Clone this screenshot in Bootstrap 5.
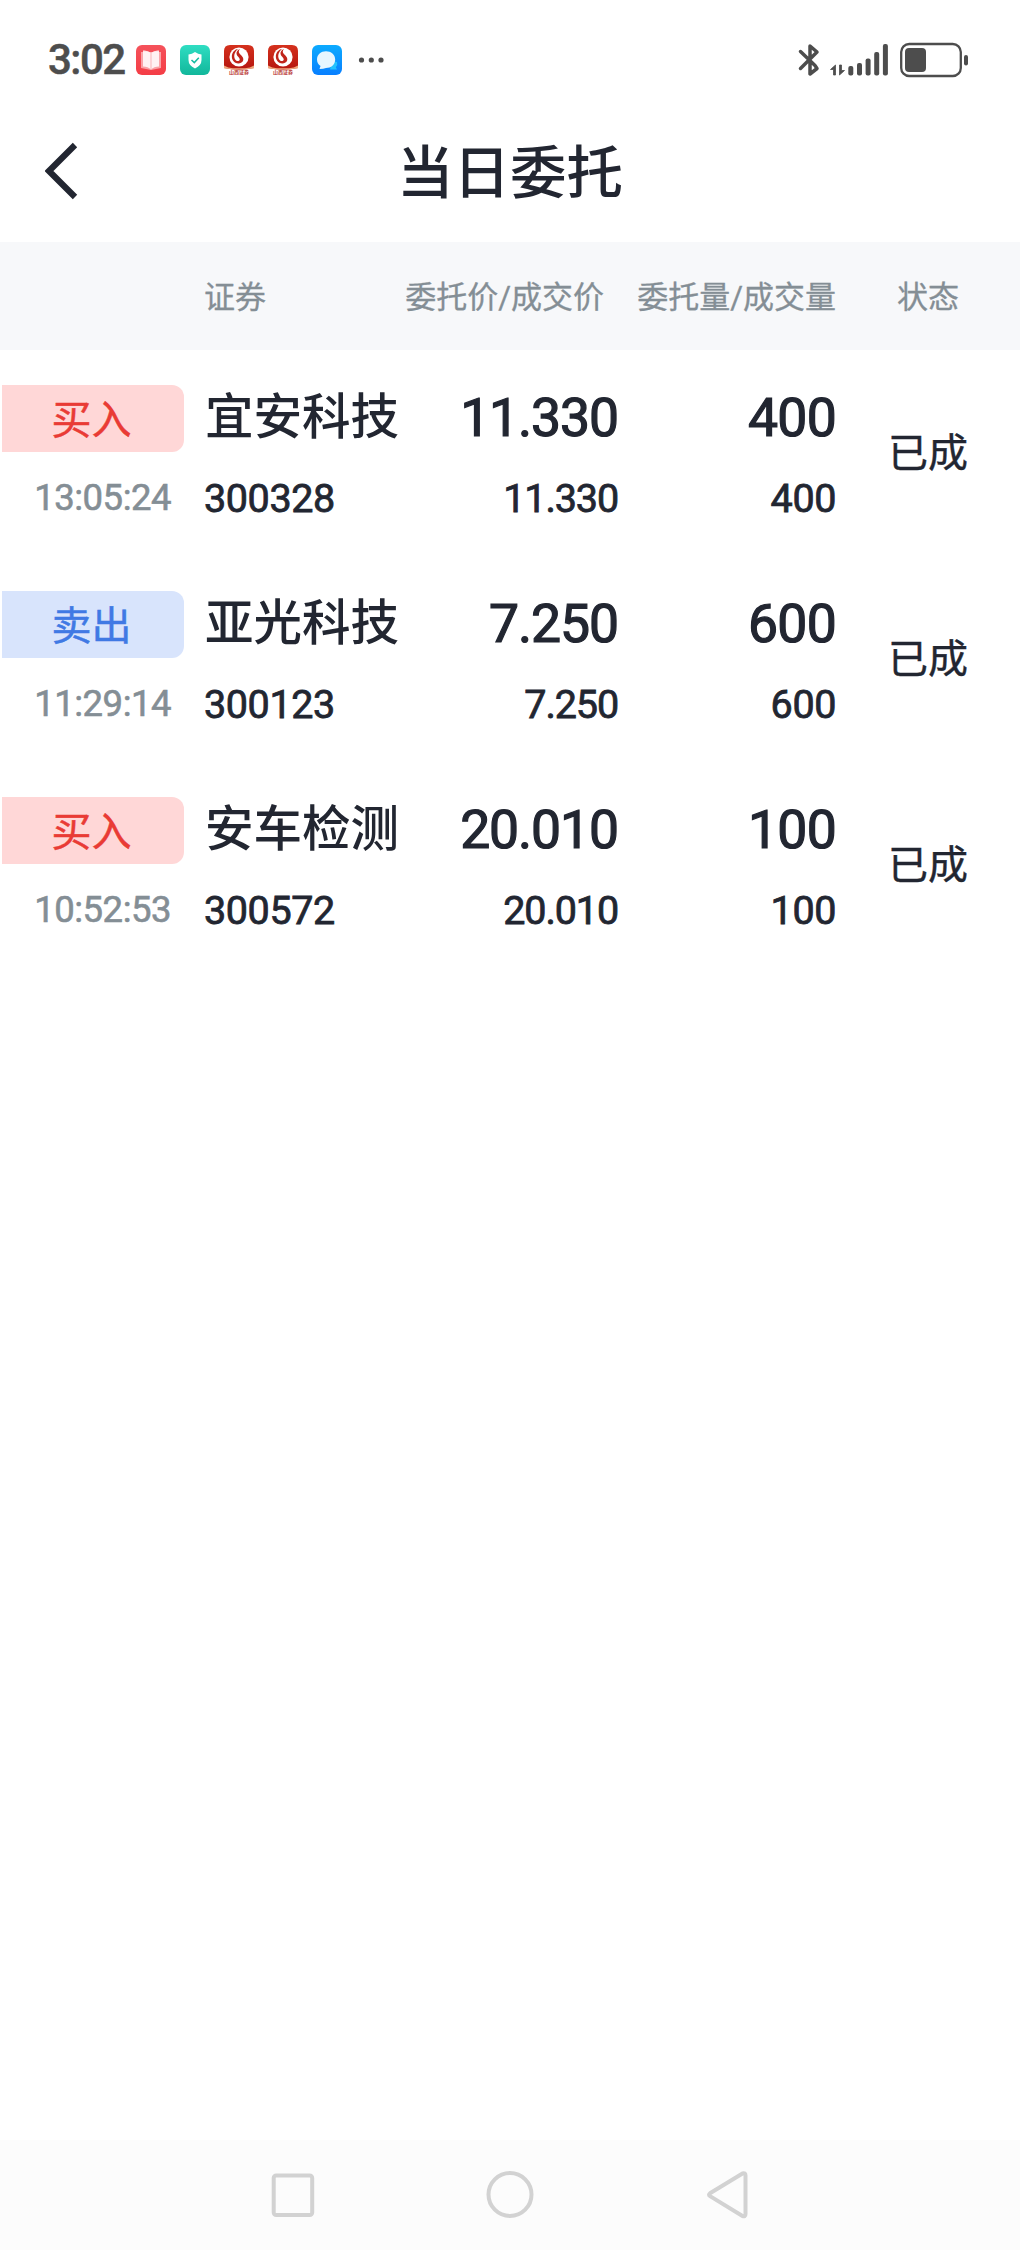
<!DOCTYPE html>
<html lang="zh-CN">
<head>
<meta charset="utf-8">
<meta name="viewport" content="width=device-width, initial-scale=1">
<title>当日委托</title>
<link href="https://cdn.jsdelivr.net/npm/bootstrap@5.3.0/dist/css/bootstrap.min.css" rel="stylesheet">
<style>
  body { font-family: Roboto, "Noto Sans CJK SC", sans-serif; color: #222631; background: #fff; font-weight: 500; }
  svg { display: block; flex: none; }
  .screen { width: 1020px; height: 2250px; overflow: hidden; }
  .status-bar { height: 120px; padding: 0 52px 0 48px; color: #4d4d4d; }
  .clock { font-size: 42px; font-weight: 500; -webkit-text-stroke: .5px; letter-spacing: -1.5px; line-height: 60px; width: 88px; }
  .apps { gap: 14px; }
  .title-bar { height: 122px; padding-left: 45px; padding-right: 45px; }
  .title-bar h1 { font-size: 56.5px; font-weight: 500; line-height: 80px; margin: 0; padding-bottom: 14px; }
  .back { width: 34px; margin-bottom: 20px; }
  .head-row { height: 108px; padding-top: 3px; background: #f7f8fa; color: #848e95; font-size: 31px; font-weight: 400; -webkit-text-stroke: .3px; line-height: 46px; }
  .c-side { width: 204px; }
  .c-name { width: 200px; }
  .c-price { width: 214px; }
  .c-qty { width: 218px; }
  .c-state { width: 184px; }
  .head-row .c-price { padding-right: 14px; }
  .order { height: 206px; }
  .order > div { padding-top: 35px; }
  .side-tag { width: 182px; height: 67px; margin-left: 1.5px; padding-right: 2px; border-radius: 0 12px 12px 0; font-size: 40px; font-weight: 400; -webkit-text-stroke: .5px; line-height: 71px; }
  .buy { background: #ffd7d7; color: #e93b35; }
  .sell { background: #d8e4fc; color: #4079e4; }
  .time { color: #848e95; font-size: 36.5px; font-weight: 400; -webkit-text-stroke: .6px; letter-spacing: -.5px; line-height: 50px; margin-top: 21px; padding-right: 33px; }
  .big { font-size: 53.5px; font-weight: 400; -webkit-text-stroke: 1.2px; letter-spacing: -.7px; line-height: 65px; height: 67px; }
  .stock { font-size: 48.5px; line-height: 66px; height: 67px; padding-left: 1px; font-weight: 500; }
  .sub { font-size: 39.5px; font-weight: 400; -webkit-text-stroke: .8px; letter-spacing: -.4px; line-height: 51px; margin-top: 21px; }
  .c-price .big, .c-price .sub { letter-spacing: -1.1px; }
  .order > .c-state { padding-top: 76px; font-size: 40px; font-weight: 400; -webkit-text-stroke: .4px; line-height: 56px; }
  .nav-keys { height: 110px; background: #fcfcfc; padding: 0 270px; }
</style>
<script src="https://cdn.jsdelivr.net/npm/bootstrap@5.3.0/dist/js/bootstrap.bundle.min.js"></script>
</head>
<body>
<svg width="0" height="0" class="position-absolute" aria-hidden="true">
  <defs>
    <linearGradient id="redGrad" x1="0" y1="0" x2="0" y2="1"><stop offset="0" stop-color="#d5311d"/><stop offset="1" stop-color="#b51610"/></linearGradient>
    <linearGradient id="tealGrad" x1="0" y1="0" x2="0" y2="1"><stop offset="0" stop-color="#2fddc2"/><stop offset="1" stop-color="#12b79b"/></linearGradient>
    <linearGradient id="roseGrad" x1="0" y1="0" x2="0" y2="1"><stop offset="0" stop-color="#f5525b"/><stop offset="1" stop-color="#f43d46"/></linearGradient>
    <linearGradient id="blueGrad" x1="0" y1="0" x2="0" y2="1"><stop offset="0" stop-color="#0cabff"/><stop offset="1" stop-color="#087fff"/></linearGradient>
    <symbol id="broker" viewBox="0 0 30 30">
      <path d="M0 23V6Q0 0 6 0H24Q30 0 30 6V23Q15 26.500 0 23Z" fill="url(#redGrad)"/>
      <path d="M0 20.500Q4 23 9 23.300H21Q26 23 30 20.500V23.200Q15 26 0 23.200Z" fill="#f0a77c"/>
      <circle cx="15" cy="12" r="9.600" fill="#fff"/>
      <path d="M14 4C8 5 6.500 11.500 9 15.500C11 19 17 19.500 19 16C20.500 12.500 17 10.500 15.500 8.500C14.500 7 14.500 5.500 16 4C11.500 6 12 9.500 14 11.500C16 13.500 16.500 15 14.500 16C11.500 16.500 9.500 13 10.500 9Q11.200 6 14 4Z" fill="#c0251b"/>
      <text x="15" y="29.300" font-size="5" font-weight="700" text-anchor="middle" fill="#b93a34">山西证券</text>
    </symbol>
  </defs>
</svg>

<main class="screen d-flex flex-column">
  <header class="status-bar d-flex align-items-center justify-content-between">
    <div class="d-flex align-items-center">
      <span class="clock">3:02</span>
      <div class="apps d-flex align-items-center">
        <svg width="30" height="30" viewBox="0 0 30 30"><rect width="30" height="30" rx="6" fill="url(#roseGrad)"/><path d="M5 7H25V23L15 25L5 23Z" fill="#fff" opacity=".5"/><path d="M7 5.500Q12 5 15 8Q18 5 23 5.500V21.500Q18 21.500 15 24.500Q12 21.500 7 21.500Z" fill="#fff" opacity=".85"/><path d="M15 8V24" stroke="#f8a5a9" stroke-width=".8"/></svg>
        <svg width="30" height="30" viewBox="0 0 30 30"><rect width="30" height="30" rx="6" fill="url(#tealGrad)"/><path d="M15 7Q18 9 21.500 9.500V15Q21.500 20.500 15 23.500Q8.500 20.500 8.500 15V9.500Q12 9 15 7Z" fill="#fff"/><path d="M11.500 15L14.300 17.600L18.800 12.800" fill="none" stroke="#18bca2" stroke-width="1.500"/></svg>
        <svg width="30" height="30"><use href="#broker"/></svg>
        <svg width="30" height="30"><use href="#broker"/></svg>
        <svg width="30" height="30" viewBox="0 0 30 30"><rect width="30" height="30" rx="6" fill="url(#blueGrad)"/><path d="M18 24.500H25L23.800 22.300Q26 20 25 17L20 16Z" fill="#22c2ff"/><path d="M7.500 24L8.500 21Q5 18.500 5 14.500C5 9.500 9 6.300 14 6.300S23.200 9.500 23.200 14.500S19 23 14 23Q11.500 23.800 7.500 24Z" fill="#e6f6ff"/></svg>
        <svg width="30" height="30" viewBox="0 0 30 30" fill="#4d4d4d"><circle cx="5.500" cy="15" r="2.600"/><circle cx="15.300" cy="15" r="2.600"/><circle cx="25" cy="15" r="2.600"/></svg>
      </div>
    </div>
    <svg width="170" height="36" viewBox="797 41 170 36" fill="#4d4d4d">
      <path d="M799.500 50.500L814 64.500L816 67.500L809 73V45L816 51L799.500 67.500" fill="none" stroke="#4d4d4d" stroke-width="3.500" stroke-linejoin="round" stroke-linecap="round"/>
      <path d="M834.500 64V74H832.500V68.500H829.500ZM838.500 64H840.500V69.500H843.500L838.500 74Z" stroke="#4d4d4d" stroke-width=".8"/>
      <rect x="847.300" y="65" width="5" height="9.500" rx="2"/><rect x="856" y="62" width="5" height="12.500" rx="2"/><rect x="864.600" y="57.500" width="5" height="17" rx="2"/><rect x="873.200" y="51" width="5" height="23.500" rx="2"/><rect x="881.900" y="43" width="5" height="31.500" rx="2"/>
      <rect x="900.200" y="43" width="59.600" height="32" rx="8" fill="none" stroke="#4d4d4d" stroke-width="2.300"/>
      <rect x="904" y="47" width="21" height="24" rx="4"/>
      <rect x="963" y="54" width="4" height="10.500" rx="2"/>
    </svg>
  </header>

  <nav class="title-bar d-flex align-items-center justify-content-between">
    <a href="#" class="back" aria-label="返回"><svg width="34" height="58" viewBox="0 0 34 58"><path d="M30 3L4 29L30 55" fill="none" stroke="#222631" stroke-width="6.200"/></svg></a>
    <h1>当日委托</h1>
    <span class="back"></span>
  </nav>

  <div class="head-row d-flex align-items-center text-nowrap">
    <div class="c-side"></div>
    <div class="c-name">证券</div>
    <div class="c-price text-end">委托价/成交价</div>
    <div class="c-qty text-end">委托量/成交量</div>
    <div class="c-state text-center">状态</div>
  </div>

  <section class="flex-grow-1 text-nowrap">
    <article class="order d-flex">
      <div class="c-side"><div class="side-tag buy text-center">买入</div><div class="time text-end">13:05:24</div></div>
      <div class="c-name"><div class="stock">宜安科技</div><div class="sub">300328</div></div>
      <div class="c-price text-end"><div class="big">11.330</div><div class="sub">11.330</div></div>
      <div class="c-qty text-end"><div class="big">400</div><div class="sub">400</div></div>
      <div class="c-state text-center">已成</div>
    </article>
    <article class="order d-flex">
      <div class="c-side"><div class="side-tag sell text-center">卖出</div><div class="time text-end">11:29:14</div></div>
      <div class="c-name"><div class="stock">亚光科技</div><div class="sub">300123</div></div>
      <div class="c-price text-end"><div class="big">7.250</div><div class="sub">7.250</div></div>
      <div class="c-qty text-end"><div class="big">600</div><div class="sub">600</div></div>
      <div class="c-state text-center">已成</div>
    </article>
    <article class="order d-flex">
      <div class="c-side"><div class="side-tag buy text-center">买入</div><div class="time text-end">10:52:53</div></div>
      <div class="c-name"><div class="stock">安车检测</div><div class="sub">300572</div></div>
      <div class="c-price text-end"><div class="big">20.010</div><div class="sub">20.010</div></div>
      <div class="c-qty text-end"><div class="big">100</div><div class="sub">100</div></div>
      <div class="c-state text-center">已成</div>
    </article>
  </section>

  <footer class="nav-keys d-flex align-items-center justify-content-between">
    <svg width="46" height="50" viewBox="0 0 46 50" fill="none" stroke="#d2d2d2" stroke-width="4"><rect x="3.700" y="5.500" width="38.500" height="39.500" rx="2.500"/></svg>
    <svg width="50" height="50" viewBox="0 0 50 50" fill="none" stroke="#d2d2d2" stroke-width="4"><circle cx="25" cy="24.500" r="21.500"/></svg>
    <svg width="46" height="50" viewBox="0 0 46 50" fill="none" stroke="#d2d2d2" stroke-width="4" stroke-linejoin="round"><path d="M5 24.700Q5 24 6 23.300L38.500 3.500Q41.500 2.500 41.500 5.500V44Q41.500 47 38.500 46L6 26.100Q5 25.500 5 24.700Z"/></svg>
  </footer>
</main>
</body>
</html>
